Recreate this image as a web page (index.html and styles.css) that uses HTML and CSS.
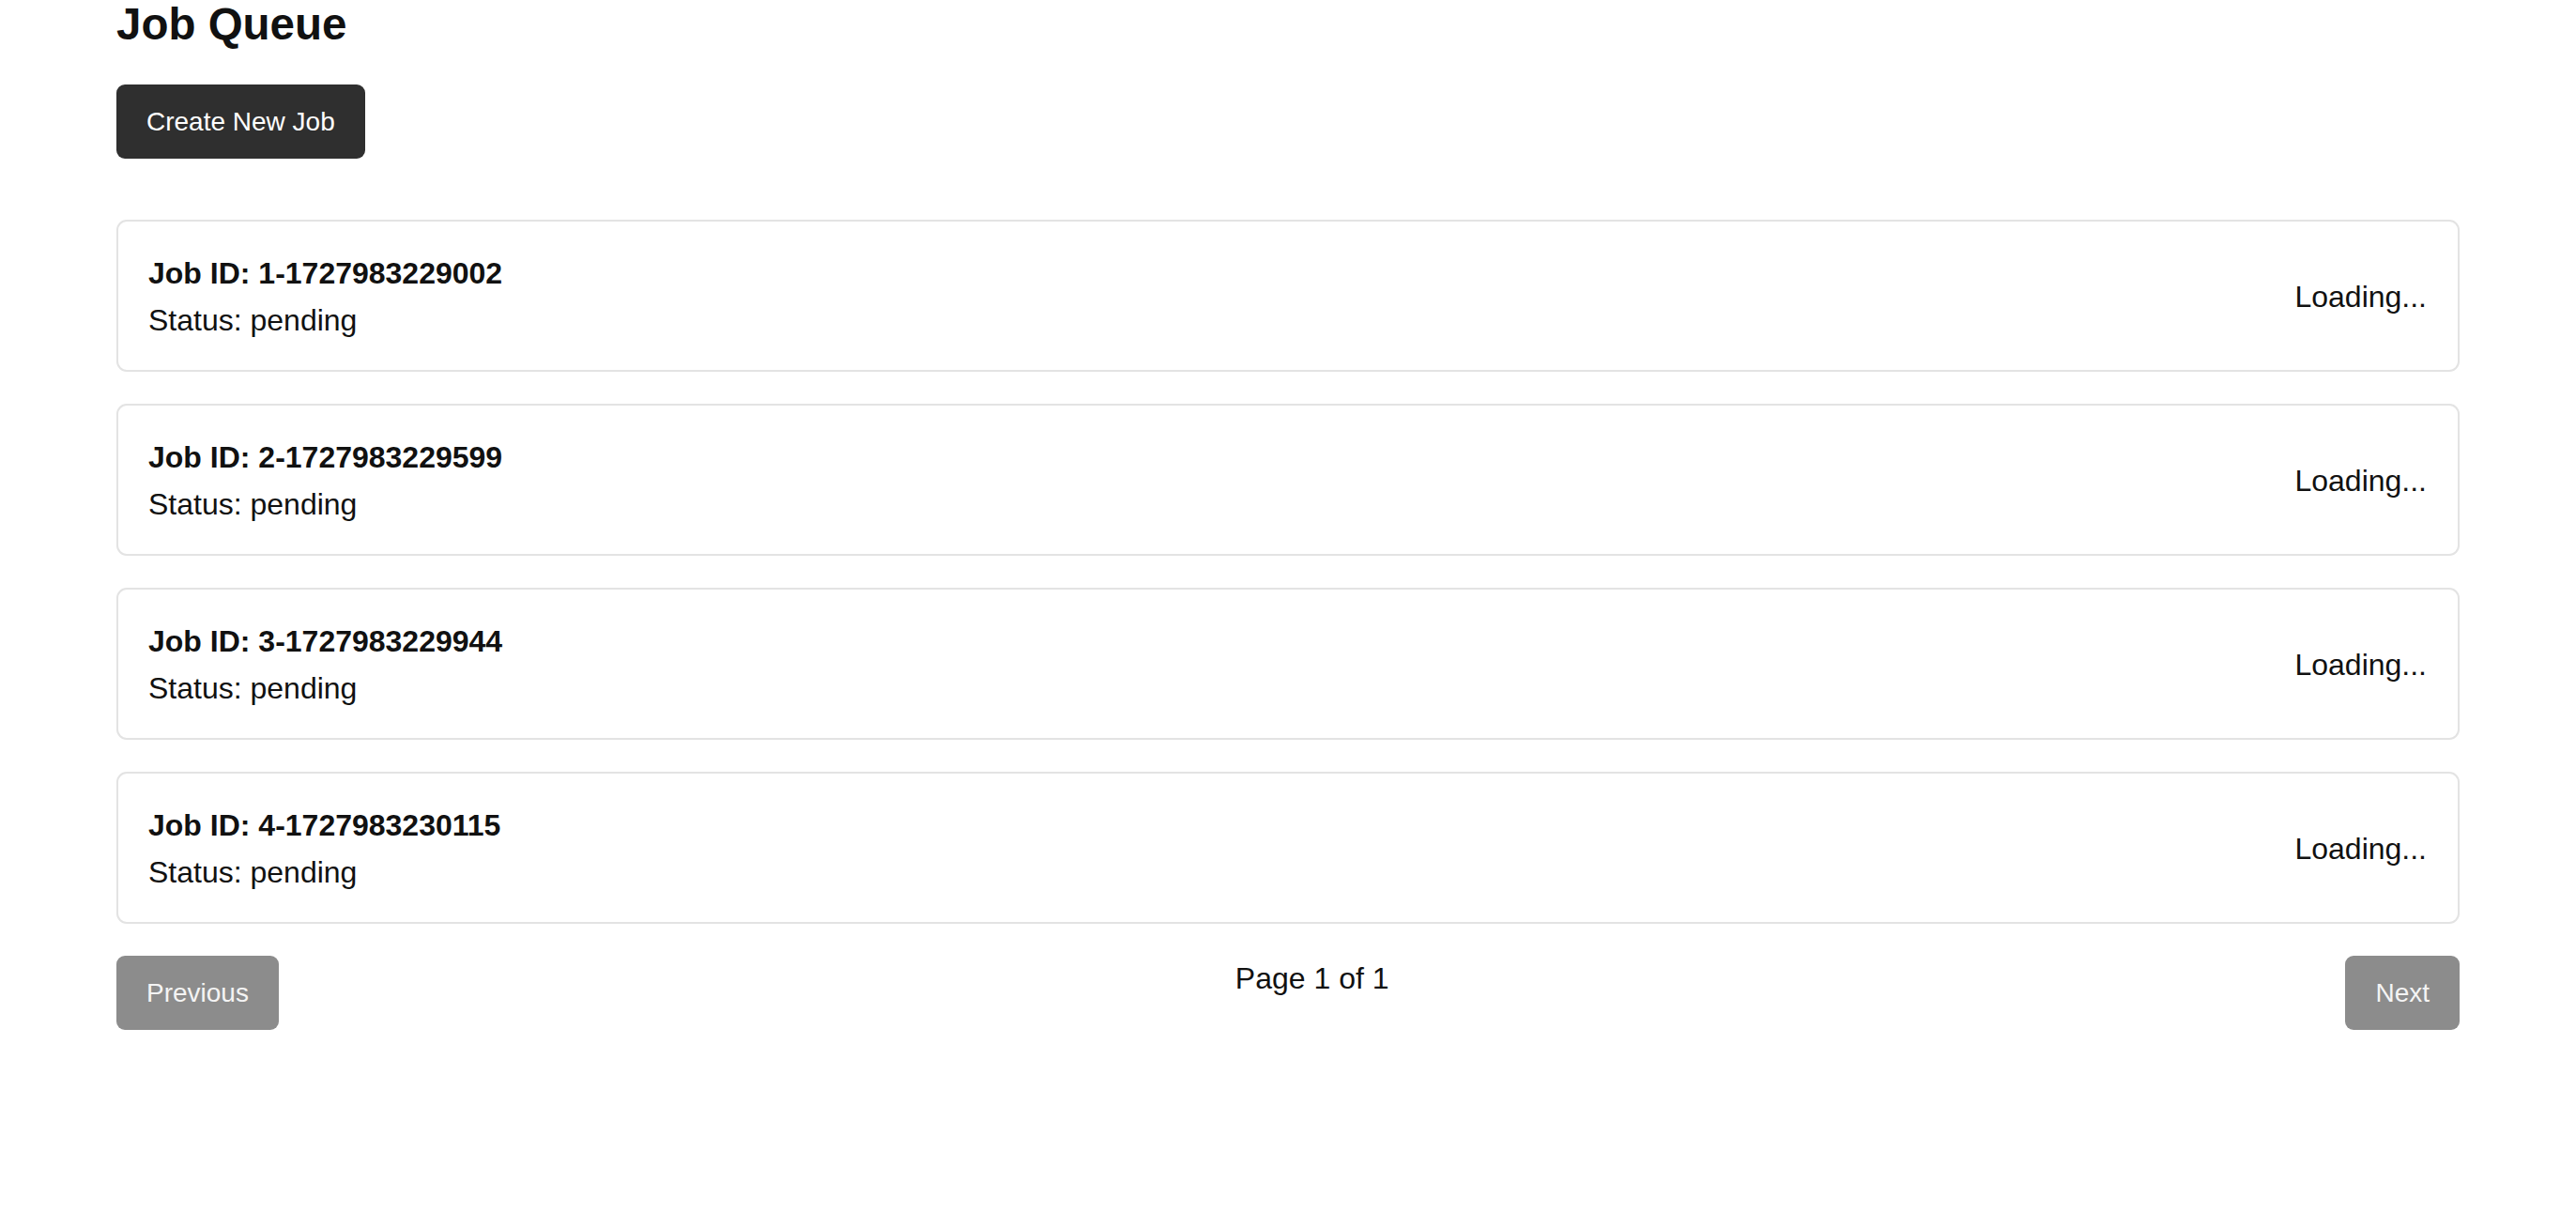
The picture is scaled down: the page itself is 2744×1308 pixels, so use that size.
FILE: index.html
```html
<!DOCTYPE html>
<html lang="en">
<head>
<meta charset="utf-8">
<title>Job Queue</title>
<link rel="stylesheet" href="styles.css">
</head>
<body>
<div class="container">
  <h1 class="title">Job Queue</h1>
  <button class="btn btn-primary">Create New Job</button>
  <div class="job-list">
    <div class="job-card">
      <div class="job-info">
        <div class="job-id">Job ID: 1-1727983229002</div>
        <div class="job-status">Status: pending</div>
      </div>
      <div class="job-result">Loading...</div>
    </div>
    <div class="job-card">
      <div class="job-info">
        <div class="job-id">Job ID: 2-1727983229599</div>
        <div class="job-status">Status: pending</div>
      </div>
      <div class="job-result">Loading...</div>
    </div>
    <div class="job-card">
      <div class="job-info">
        <div class="job-id">Job ID: 3-1727983229944</div>
        <div class="job-status">Status: pending</div>
      </div>
      <div class="job-result">Loading...</div>
    </div>
    <div class="job-card">
      <div class="job-info">
        <div class="job-id">Job ID: 4-1727983230115</div>
        <div class="job-status">Status: pending</div>
      </div>
      <div class="job-result">Loading...</div>
    </div>
  </div>
  <div class="pagination">
    <button class="btn btn-disabled" disabled>Previous</button>
    <span class="page-info">Page 1 of 1</span>
    <button class="btn btn-disabled" disabled>Next</button>
  </div>
</div>
</body>
</html>
```
FILE: styles.css
```css
* { box-sizing: border-box; }
html, body {
  margin: 0;
  padding: 0;
  background: #ffffff;
}
body {
  font-family: "Liberation Sans", Arial, sans-serif;
  color: #111;
}
.container {
  padding: 0 124px 0 124px;
}
.title {
  margin: 0;
  font-size: 47.5px;
  font-weight: 700;
  line-height: 52px;
  color: #111;
}
.btn {
  font-family: "Liberation Sans", Arial, sans-serif;
  font-size: 28px;
  line-height: 33px;
  padding: 23px 32px;
  border: none;
  border-radius: 9px;
  color: #fff;
  cursor: pointer;
}
.btn-primary {
  margin-top: 38px;
  background: #2f2f2f;
}
.btn-disabled {
  background: #8c8c8c;
  color: #f4f4f4;
  cursor: default;
}
.job-list {
  margin-top: 65px;
  display: flex;
  flex-direction: column;
  gap: 34px;
}
.job-card {
  display: flex;
  justify-content: space-between;
  align-items: center;
  border: 2px solid #e3e3e3;
  border-radius: 11px;
  padding: 37px 33px 35px 32px;
  font-size: 32px;
  line-height: 36px;
}
.job-id {
  font-weight: 700;
  margin-bottom: 14px;
}
.pagination {
  margin-top: 34px;
  display: flex;
  justify-content: space-between;
  align-items: flex-start;
}
.page-info {
  font-size: 32px;
  line-height: 36px;
  padding-top: 6px;
}
```
